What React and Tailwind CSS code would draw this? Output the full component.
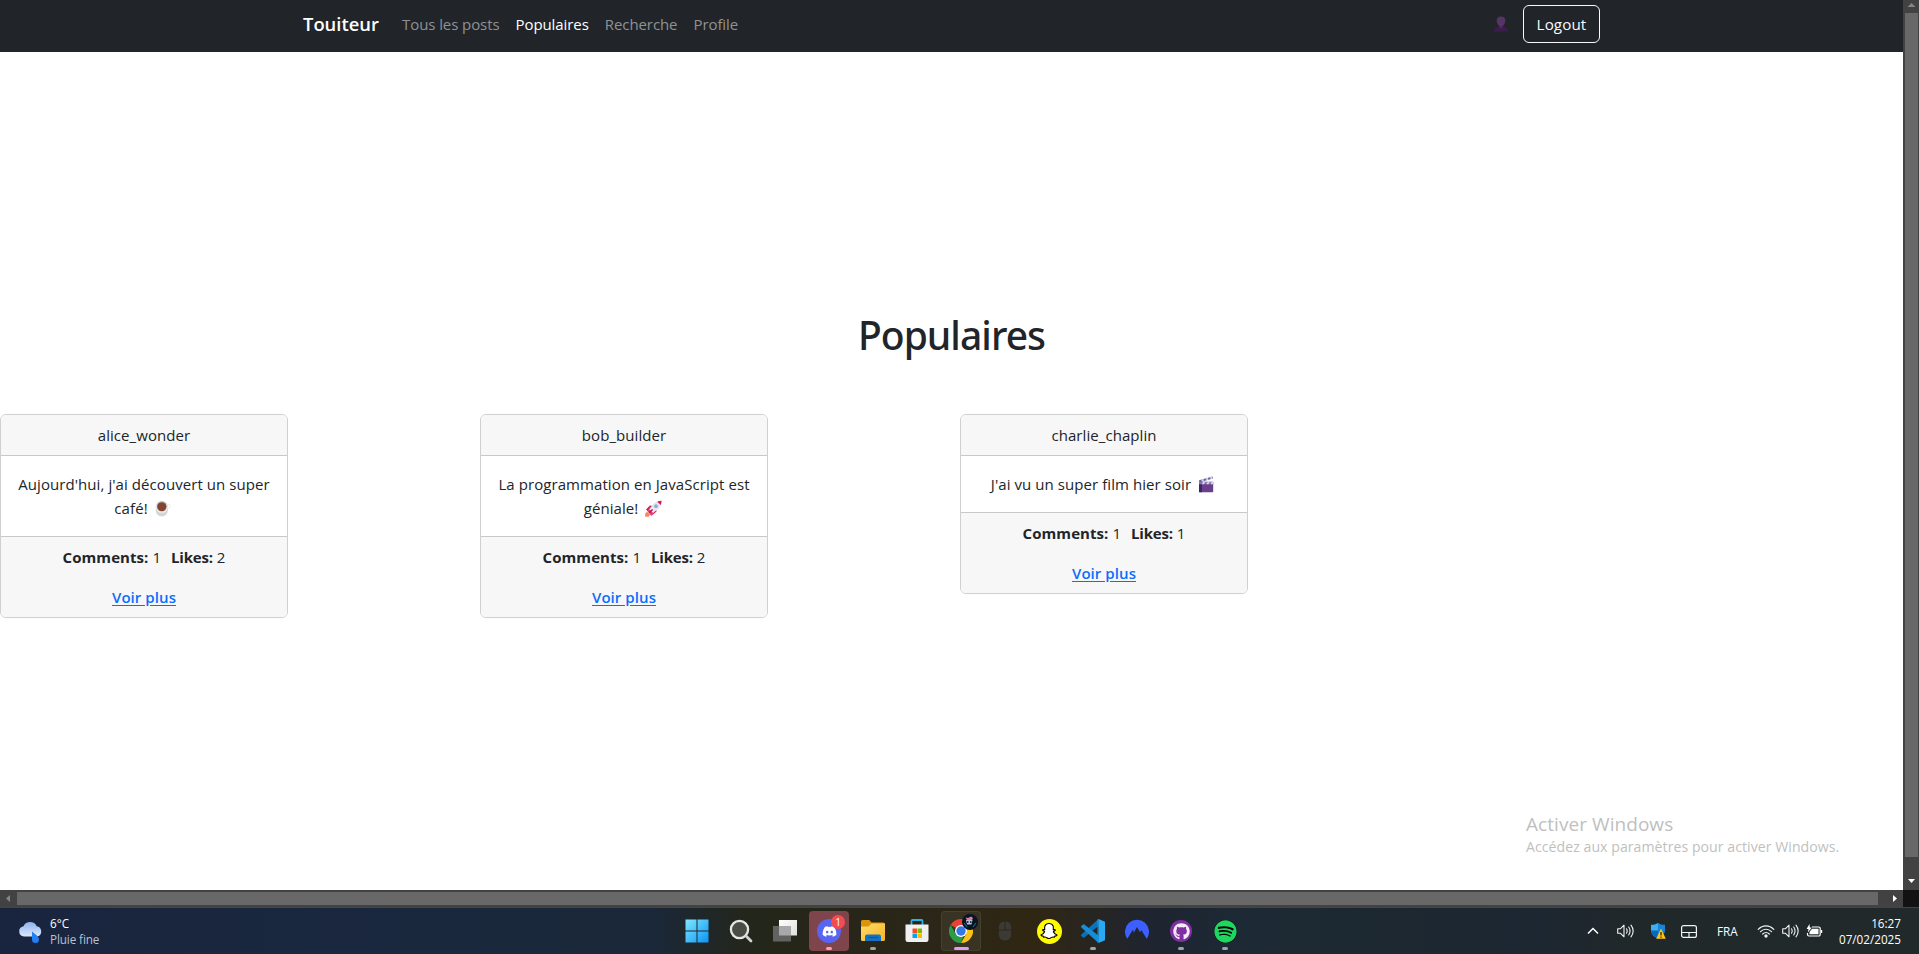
import React from "react";
import { FaSnapchatGhost, FaDiscord, FaSpotify, FaGithub } from "react-icons/fa";

function CoffeeEmoji() {
  return (
    <svg role="img" aria-label="café" viewBox="0 0 22 18" className="inline-block h-[18px] w-[22px] align-[-4px]">
      <path d="M15 4.5h1.6a1.6 1.6 0 0 1 .2 3.2L15 9" fill="none" stroke="#f1f1f1" strokeWidth="1.2" />
      <path d="M3.8 7a6 6 0 0 1 12 0v3.500a6 6 0 0 1-12 0z" fill="#d4d4d4" />
      <ellipse cx="9.8" cy="7.300" rx="6" ry="5.800" fill="#e8e8e8" />
      <circle cx="9.800" cy="6.600" r="4.700" fill="#83452f" />
      <path d="M6.200 3.600a4.700 4.700 0 0 1 7.200 0" fill="none" stroke="#a99c98" strokeWidth="1" />
    </svg>
  );
}

function RocketEmoji() {
  return (
    <svg role="img" aria-label="fusée" viewBox="0 0 22 18" className="inline-block h-[18px] w-[22px] align-[-4px]">
      <path d="M4 9.500 8 5.500l4 .5-5.500 6zM9.500 15.800l5-4.300-.5-3.500-6.500 6z" fill="#d9174f" />
      <path d="M3.200 16.800v-3.300l2-1.700 3 3-1.700 2z" fill="#ff8257" />
      <path d="M5.500 11.300 11.500 3.800C13.500 1.700 16.500 1 19.500.8c0 3-.6 5.200-2.600 7.500L9 14.800z" fill="#e9e4ee" />
      <path d="m5.500 11.300 1.700-2.100 4 3.800L9 14.800z" fill="#e93a66" />
      <path d="M15.200 1.800c1.300-.7 2.700-.9 4.300-1 0 1.500-.2 2.900-.8 4.200z" fill="#d9174f" />
      <path d="m7 13 3.500-3.500" stroke="#c30d45" strokeWidth="1.500" />
      <circle cx="14" cy="6.200" r="1.900" fill="#7fb7dc" />
    </svg>
  );
}

function ClapperEmoji() {
  return (
    <svg role="img" aria-label="clap de cinéma" viewBox="0 0 22 18" className="inline-block h-[18px] w-[22px] align-[-4px]">
      <path d="m4 4.300 13.500-3.800.6 1.900L4.500 6.200z" fill="#6f6298" />
      <path d="m6.500 3.600 2-.6.2 2-2 .5zm4.500-1.200 2-.6.2 2-2 .5zm4.300-1.200 1.700-.5.500 2-2 .5z" fill="#d9d5ea" />
      <rect x="4" y="5.800" width="14.200" height="10.400" rx=".6" fill="#6a408c" />
      <rect x="4" y="5.800" width="3" height="10.400" fill="#42255f" />
      <path d="M4 6h14.200v2.200H4z" fill="#8578b3" />
      <path d="m8 6 2 0-1 2.200H7zm4.500 0h2l-1 2.200h-2zm4 0h1.700v1l-.6 1.200h-2z" fill="#dcd6ee" />
    </svg>
  );
}

const posts = [
  { user: "alice_wonder", lines: ["Aujourd'hui, j'ai découvert un super", "café! "], emoji: <CoffeeEmoji />, comments: 1, likes: 2 },
  { user: "bob_builder", lines: ["La programmation en JavaScript est", "géniale! "], emoji: <RocketEmoji />, comments: 1, likes: 2 },
  { user: "charlie_chaplin", lines: ["J'ai vu un super film hier soir "], emoji: <ClapperEmoji />, comments: 1, likes: 1 },
];

function Card({ post }) {
  return (
    <article className="w-[288px] overflow-hidden rounded-md border border-[#d0d0d0] bg-white text-center text-[15px] leading-6 tracking-[0.07px]">
      <header className="border-b border-[#c9c9c9] bg-[#f7f7f7] py-2">{post.user}</header>
      <div className="py-4">
        {post.lines.map((line, i) => (
          <p key={line} className="h-6 whitespace-nowrap">
            {line}
            {i === post.lines.length - 1 && post.emoji}
          </p>
        ))}
      </div>
      <footer className="flex flex-col items-center gap-4 border-t border-[#c9c9c9] bg-[#f7f7f7] py-2">
        <div className="flex gap-[10px]">
          <span><b>Comments:</b> {post.comments}</span>
          <span><b className="tracking-[-0.2px]">Likes:</b> {post.likes}</span>
        </div>
        <a href="#" className="font-semibold text-[#0d6efd] underline underline-offset-2">Voir plus</a>
      </footer>
    </article>
  );
}

function Navbar() {
  return (
    <nav className="flex h-[52px] items-center bg-[#212529] pr-[303px] pb-1 pl-[303px] text-[15px] leading-6 text-[#8f9295]">
      <a href="#" className="mr-[23px] w-[76px] text-[18.4px] font-semibold whitespace-nowrap text-white">Touiteur</a>
      <div className="flex gap-4 tracking-[-0.08px]">
        <a href="#">Tous les posts</a>
        <a href="#" className="text-white">Populaires</a>
        <a href="#">Recherche</a>
        <a href="#">Profile</a>
      </div>
      <div className="ml-auto flex items-center gap-[15px]">
        <svg viewBox="0 0 14 16" className="h-4 w-[14px]" role="img" aria-label="Profil">
          <path d="M0 15.500v-1.200C.3 12 2.500 11 4.500 10.700h5c2 .3 4.200 1.300 4.500 3.600v1.200z" fill="#3a1c4d" />
          <path d="M5 9h4v2.500L7 13l-2-1.500z" fill="#472759" />
          <path d="M2.700 4.600C2.700 1.800 4.600.5 7 .5s4.300 1.300 4.300 4.100C11.300 8 9 10.500 7 10.500S2.700 8 2.700 4.600z" fill="#563566" />
        </svg>
        <button className="h-[38px] w-[77px] rounded-md border border-[#f8f9fa] text-[15.2px] leading-6 text-[#f8f9fa] tracking-[0.1px]">Logout</button>
      </div>
    </nav>
  );
}

function VerticalScrollbar() {
  return (
    <div className="flex w-4 flex-col items-center bg-[#424242]">
      <svg viewBox="0 0 16 13" className="h-[13px] w-4"><path d="m4.500 7 4-4 4 4z" fill="#868686" /></svg>
      <div className="ml-px h-[844px] w-[13px] bg-[#686868]" />
      <svg viewBox="0 0 16 33" className="h-[33px] w-4"><path d="M5 22h7l-3.500 4z" fill="#fff" /></svg>
    </div>
  );
}

function HorizontalScrollbar() {
  return (
    <div className="flex h-[17px] bg-[#121212]">
      <div className="flex h-[17px] w-[1903px] items-center bg-[#424242]">
        <svg viewBox="0 0 17 17" className="h-[17px] w-[17px]"><path d="M10 5v7L6 8.500z" fill="#868686" /></svg>
        <div className="mb-px h-[13px] w-[1861px] bg-[#686868]" />
        <svg viewBox="0 0 25 17" className="h-[17px] w-[25px]"><path d="M15 5v7l4-3.500z" fill="#fff" /></svg>
      </div>
    </div>
  );
}

function Dock({ children, active, dot }) {
  return (
    <div className={`relative flex h-10 w-10 items-center justify-center rounded ${active || ""}`}>
      {children}
      {dot && <span className={`absolute bottom-px h-[3px] rounded-full ${dot}`} />}
    </div>
  );
}

const grayDot = "w-1.5 bg-[#a2a2a2]";

function DockIcons() {
  return (
    <div className="absolute left-[677px] flex gap-1">
      <Dock>
        <svg viewBox="0 0 24 24" className="h-6 w-6">
          <defs><linearGradient id="win" x2="1" y2="1"><stop stopColor="#7fe8ff" /><stop offset="1" stopColor="#0a93f5" /></linearGradient></defs>
          <path d="M.5.500h11v11h-11zm12 0h11v11h-11zm-12 12h11v11h-11zm12 0h11v11h-11z" fill="url(#win)" />
        </svg>
      </Dock>
      <Dock>
        <svg viewBox="0 0 24 24" className="h-6 w-6">
          <circle cx="10.500" cy="10.500" r="8.600" fill="#4b4d45" stroke="#e6e6e6" strokeWidth="2.300" />
          <path d="m17.300 17.300 4.700 4.700" stroke="#d4d4d4" strokeWidth="2.800" strokeLinecap="round" />
        </svg>
      </Dock>
      <Dock>
        <svg viewBox="0 0 24 24" className="h-6 w-6">
          <defs><linearGradient id="tv" x2="1" y2="1"><stop stopColor="#fff" /><stop offset="1" stopColor="#dedede" /></linearGradient></defs>
          <path d="M6 1h18v15.500H6z" fill="url(#tv)" />
          <path d="M0 7h18v15.500H0z" fill="#626262" />
          <path d="M6 7h12v9.500H6z" fill="#a8a8a8" />
        </svg>
      </Dock>
      <Dock active="bg-[#7e454c]" dot="w-1.5 bg-[#ff9ea5]">
        <span className="flex h-6 w-6 items-center justify-center rounded-full bg-[#5865f2]"><FaDiscord className="h-[15px] w-[15px] text-white" /></span>
        <span className="absolute top-1 right-1 flex h-[14px] w-[14px] items-center justify-center rounded-full bg-[#f14c50] text-[10px] leading-none text-white">1</span>
      </Dock>
      <Dock dot={grayDot}>
        <svg viewBox="0 0 24 24" className="h-6 w-6">
          <defs><linearGradient id="fo" x2="1" y2="1"><stop stopColor="#ffdc68" /><stop offset="1" stopColor="#f6b524" /></linearGradient></defs>
          <path d="M0 2.500A1.500 1.500 0 0 1 1.500 1h6.700l2.300 2.500H22A2 2 0 0 1 24 5v6H0z" fill="#d9960d" />
          <path d="M0 7.500h7.500L10.500 4.500H24v16a1.500 1.500 0 0 1-1.500 1.500h-21A1.500 1.500 0 0 1 0 20.500z" fill="url(#fo)" />
          <path d="M4 17.500A2 2 0 0 1 6 15.500h12a2 2 0 0 1 2 2V22H4z" fill="#1472c4" />
          <path d="M7 18.500h10" stroke="#0b559b" strokeWidth="1.200" />
        </svg>
      </Dock>
      <Dock>
        <svg viewBox="0 0 24 24" className="h-6 w-6">
          <path d="M6.500 6V2a1 1 0 0 1 1-1h9a1 1 0 0 1 1 1v4" fill="none" stroke="#25b4ec" strokeWidth="1.800" />
          <path d="M.5 5.500h23v15a2.500 2.500 0 0 1-2.500 2.500H3a2.500 2.500 0 0 1-2.500-2.500z" fill="#f0f0f0" />
          <path d="M7.500 9.500H12V14H7.500z" fill="#f25022" /><path d="M12.500 9.500H17V14h-4.500z" fill="#7fba00" />
          <path d="M7.500 14.500H12V19H7.500z" fill="#00a4ef" /><path d="M12.500 14.500H17V19h-4.500z" fill="#ffb900" />
        </svg>
      </Dock>
      <Dock active="bg-[#383323] ring-1 ring-inset ring-[#45402f]" dot="w-[15px] bg-[#df9df0]">
        <svg viewBox="0 0 24 24" className="h-6 w-6">
          <path d="M12 12 1.600 6A12 12 0 0 1 22.400 6z" fill="#e94235" />
          <path d="M12 6h10.400A12 12 0 0 1 12 24l5.200-9z" fill="#fbc116" />
          <path d="M1.600 6 6.800 15 12 18l2.500-.6L12 24A12 12 0 0 1 1.600 6z" fill="#2d9c47" />
          <circle cx="12" cy="12" r="6" fill="#fff" /><circle cx="12" cy="12" r="4.700" fill="#3478e8" />
        </svg>
        <svg viewBox="0 0 16 16" className="absolute top-[3px] right-[3px] h-4 w-4">
          <circle cx="8" cy="8" r="8" fill="#091322" />
          <path d="m3.500 3.500 2.500.5 3-1.500 2 1.500-1 2H5z" fill="#d77fa5" />
          <path d="M4 6h6.500l-1 4.500H5z" fill="#b5c6d4" />
          <path d="M5 7h1.500v2H5zm3 0h1.500v2H8z" fill="#24364e" />
          <path d="m2 9 3 4m6 0 3-4" stroke="#177c98" />
        </svg>
      </Dock>
      <Dock>
        <svg viewBox="0 0 14 20" className="h-5 w-[14px]">
          <path d="M6.500.5v8H.8V6A5.500 5.500 0 0 1 6.500.5zm1 0A5.500 5.500 0 0 1 13.200 6v2.500H7.500zM.8 9.500h12.400V14a6.200 5.500 0 0 1-12.400 0z" fill="#3b3a36" />
        </svg>
      </Dock>
      <Dock>
        <span className="flex h-[25px] w-[25px] items-center justify-center rounded-full bg-[#fffc00]">
          <FaSnapchatGhost className="h-4 w-4 overflow-visible fill-white stroke-black stroke-[36]" />
        </span>
      </Dock>
      <Dock dot={grayDot}>
        <svg viewBox="0 0 24 24" className="h-6 w-6">
          <path d="m17.500 0 .3 6.800L3.300 18.500a1 1 0 0 1-1.300 0l-1.600-1.400a1 1 0 0 1 0-1.500z" fill="#0b72ba" />
          <path d="M.4 7 2 5.600a1 1 0 0 1 1.300-.1L17.800 16.800l-.3 7.200L.4 8.500A1 1 0 0 1 .4 7z" fill="#148ed6" />
          <path d="M17.500 0 24 2.800v18.400L17.500 24z" fill="#29a9f2" />
          <path d="M16.500.5 17.500 0v24l-1-.5z" fill="#1c93dc" />
        </svg>
      </Dock>
      <Dock>
        <svg viewBox="0 0 24 24" className="h-6 w-6">
          <path d="M2.300 19.700A12 12 0 1 1 21.700 19.700L16.300 11 15 13.200 15.600 14.200 12 8 8.500 14.200l.2-2L7.700 11z" fill="#3e5fff" />
        </svg>
      </Dock>
      <Dock dot={grayDot}>
        <span className="flex h-[22px] w-[22px] items-center justify-center rounded-full bg-[#7f2f9f]"><FaGithub className="h-[17px] w-[17px] text-[#f4eaf8]" /></span>
      </Dock>
      <Dock dot={grayDot}>
        <span className="flex h-[23px] w-[23px] items-center justify-center rounded-full bg-black"><FaSpotify className="h-[23px] w-[23px] text-[#1ed760]" /></span>
      </Dock>
    </div>
  );
}

function Speaker() {
  return (
    <svg viewBox="0 0 17 14" className="h-[14px] w-[17px]" fill="none" stroke="#f2f2f2" strokeWidth="1.100" strokeLinecap="round" strokeLinejoin="round">
      <path d="M.7 4.800h2.600L7 1.200v11.600L3.300 9.200H.7z" />
      <path d="M9.500 4.800c.8 1.300.8 3.100 0 4.400M11.700 3c1.700 2.500 1.700 5.500 0 8M14 1.200c2.600 3.500 2.600 8.100 0 11.600" />
    </svg>
  );
}

function Taskbar() {
  return (
    <div className="relative flex h-[47px] items-center justify-between border-t border-[#3b4650] bg-linear-[90deg,#19253e_0%,#1a283f_20%,#1a2839_34%,#23261a_39%,#2a2618_47%,#302614_54%,#1e2430_60%,#1c2a35_65%,#1d2830_72%,#1d2733_79%,#20282a_85%,#22292a_100%] pr-[18px] pl-[18px] text-[11.7px] leading-4 text-white">
      <div className="flex items-center gap-[7px]">
        <svg viewBox="0 0 25 24" className="h-6 w-[25px]">
          <defs><linearGradient id="cl" x2="0" y2="1"><stop stopColor="#8fb2f0" /><stop offset="1" stopColor="#dce8fb" /></linearGradient></defs>
          <path d="M6 17.500A5.200 5.200 0 0 1 5.500 7.200a7.300 7.300 0 0 1 13.200 0A5.300 5.300 0 0 1 19.500 17.500z" fill="url(#cl)" />
          <path d="M14 12.500c3 2.500 7 5 7 8a3.500 3.500 0 0 1-7 0z" fill="#2280f5" />
        </svg>
        <div className="text-[#b9c2cf]">
          <p className="text-white">6°C</p>
          <p className="tracking-[-0.1px]">Pluie fine</p>
        </div>
      </div>
      <DockIcons />
      <div className="flex items-center">
        <svg viewBox="0 0 12 8" className="mr-[18px] h-2 w-3" fill="none" stroke="#fff" strokeWidth="1.500"><path d="m1 6.500 5-5 5 5" /></svg>
        <Speaker />
        <svg viewBox="0 0 16 16" className="mr-[15px] ml-4 h-4 w-4 overflow-visible">
          <path d="M8 0c2 1.300 4.300 1.800 7 1.800V7c0 4-3 7-7 8.500z" fill="#1784d8" />
          <path d="M8 0C6 1.300 3.700 1.800 1 1.800V7c0 4 3 7 7 8.500z" fill="#36b3f0" />
          <path d="M1 7.500h7v8C4 14 1.300 11 1 7.500z" fill="#0d65bd" />
          <path d="m11 5.500 4.800 10.200H6.200z" fill="#fdc416" />
          <path d="M11 9v3.500M11 13.500v1.200" stroke="#3a2a00" strokeWidth="1.300" />
        </svg>
        <svg viewBox="0 0 16 13" className="h-[13px] w-4" fill="none" stroke="#f2f2f2" strokeWidth="1.200"><rect x=".6" y=".6" width="14.800" height="11.800" rx="2" /><path d="M.6 7.500h14.800M8 7.500v5" /></svg>
        <span className="ml-5 w-[22px] font-medium">FRA</span>
        <svg viewBox="0 0 18 14" className="ml-[18px] h-[14px] w-[18px]" fill="none" stroke="#f2f2f2" strokeWidth="1.200" strokeLinecap="round">
          <path d="M1.200 5.300c4.500-4.700 11.100-4.700 15.600 0M3.500 7.700c3.200-3.300 7.800-3.300 11 0M5.700 10c2-2 4.600-2 6.600 0" />
          <circle cx="9" cy="12" r="1.100" fill="#f2f2f2" />
        </svg>
        <span className="ml-[7px] flex"><Speaker /></span>
        <svg viewBox="0 0 17 14" className="ml-[7px] h-[14px] w-[17px]">
          <path d="M6 3h6.700a1.500 1.500 0 0 1 1.500 1.500v6a1.500 1.500 0 0 1-1.500 1.500H3a1.500 1.500 0 0 1-1.500-1.500V9" fill="none" stroke="#fff" strokeWidth="1.200" />
          <path d="M6 4.800h6.500v5.500H3.500V8z" fill="#fff" />
          <path d="M15 6h1.200v3H15z" fill="#fff" />
          <path d="M3.500 0 .5 5h2L1.800 8.500 5.800 3.500h-2z" fill="#fff" />
        </svg>
        <div className="ml-[14px] w-[64px] text-right">
          <p>16:27</p>
          <p>07/02/2025</p>
        </div>
      </div>
    </div>
  );
}

export default function App() {
  return (
    <div className="relative flex h-[954px] w-[1919px] flex-col overflow-hidden bg-white font-['Open_Sans','Noto_Sans',sans-serif] text-[#212529]">
      <div className="flex h-[890px]">
        <div className="w-[1903px] overflow-hidden">
          <Navbar />
          <h1 className="mt-[259px] mb-[55px] text-center font-['Noto_Sans',sans-serif] text-[39px] leading-[48px] font-medium tracking-[-0.95px]">Populaires</h1>
          <main className="grid w-[1920px] grid-cols-4 items-start">
            {posts.map((post) => <Card key={post.user} post={post} />)}
          </main>
        </div>
        <VerticalScrollbar />
      </div>
      <HorizontalScrollbar />
      <Taskbar />
      <div className="absolute top-[812px] left-[1526px] text-[#bfbfbf]">
        <p className="text-[19px] leading-6 tracking-[0.06px]">Activer Windows</p>
        <p className="text-[14.1px] leading-[22px] tracking-[0.05px]">Accédez aux paramètres pour activer Windows.</p>
      </div>
    </div>
  );
}
